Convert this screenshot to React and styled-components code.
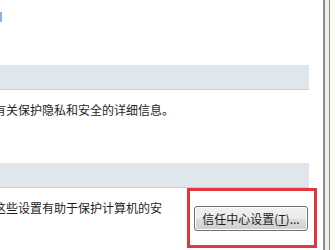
import React from "react";
import styled, { createGlobalStyle } from "styled-components";

const Global = createGlobalStyle`
	html, body {
		margin: 0;
		padding: 0;
		width: 335px;
		height: 250px;
		overflow: hidden;
		background: #fff;
		font-family: "Noto Sans CJK SC", "Noto Sans", sans-serif;
		font-size: 12px;
		color: #1e1e1e;
	}
`;

const Frame = styled.div`
	display: flex;
	height: 250px;
`;

const Content = styled.div`
	width: 323px;
	padding-right: 14px;
	box-sizing: border-box;
	background: #fff;
	overflow: hidden;
`;

const TopArea = styled.div`
	height: 65px;
	padding-top: 12px;
	box-sizing: border-box;
`;

const FocusEdge = styled.div`
	width: 2px;
	height: 10px;
	background: #8fb2da;
`;

const Band = styled.div`
	height: 24px;
	background: #dfe6ec;
	border-bottom: 1px solid #c6ced6;
`;

const Text = styled.p`
	margin: 10px 0 0 -6px;
	line-height: 20px;
	white-space: nowrap;
`;

const Gap = styled.div`
	height: ${(p) => p.h}px;
`;

const ActionRow = styled.div`
	position: relative;
	display: flex;
	justify-content: space-between;
	align-items: flex-start;
`;

const Button = styled.button`
	margin: 18px 1px 0 0;
	width: 114px;
	height: 25px;
	padding: 0;
	border: 1px solid #707070;
	border-radius: 3px;
	box-shadow: inset 0 0 0 1px #fcfcfc;
	background: linear-gradient(#f2f2f2 0%, #ebebeb 50%, #dddddd 51%, #cfcfcf 100%);
	font-family: inherit;
	font-size: 12px;
	color: #1e1e1e;
	line-height: 23px;

	u {
		text-decoration: underline;
		text-underline-offset: 1px;
	}
`;

const Highlight = styled.div`
	position: absolute;
	left: 187px;
	top: 0;
	width: 130px;
	height: 60px;
	box-sizing: border-box;
	border: 3px solid #e3373d;
	pointer-events: none;
`;

const Divider = styled.div`
	width: 7px;
	box-sizing: border-box;
	border-left: 2px solid #8c8c8c;
	border-right: 1px solid #8c8c8c;
	background: #eeeeee;
`;

const Side = styled.div`
	flex: 1;
	background: #fbfbf1;
`;

export default function App() {
	return (
		<>
			<Global />
			<Frame>
				<Content>
					<TopArea>
						<FocusEdge />
					</TopArea>
					<Band />
					<Text>有关保护隐私和安全的详细信息。</Text>
					<Gap h={43} />
					<Band />
					<ActionRow>
						<Text>这些设置有助于保护计算机的安</Text>
						<Button>
							信任中心设置(<u>T</u>)...
						</Button>
						<Highlight />
					</ActionRow>
				</Content>
				<Divider />
				<Side />
			</Frame>
		</>
	);
}
